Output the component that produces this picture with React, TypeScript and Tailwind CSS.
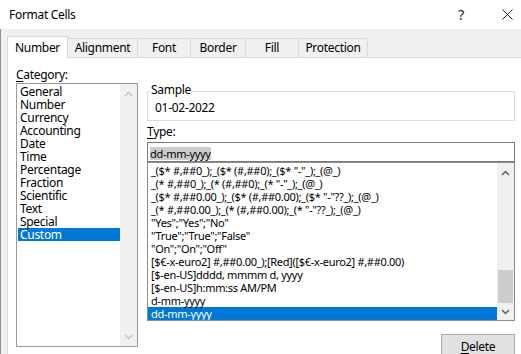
import React from "react";

const cats = ["General","Number","Currency","Accounting","Date","Time","Percentage","Fraction","Scientific","Text","Special","Custom"];
const types = [
  '_($* #,##0_);_($* (#,##0);_($* "-"_);_(@_)',
  '_(* #,##0_);_(* (#,##0);_(* "-"_);_(@_)',
  '_($* #,##0.00_);_($* (#,##0.00);_($* "-"??_);_(@_)',
  '_(* #,##0.00_);_(* (#,##0.00);_(* "-"??_);_(@_)',
  '"Yes";"Yes";"No"',
  '"True";"True";"False"',
  '"On";"On";"Off"',
  '[$€-x-euro2] #,##0.00_);[Red]([$€-x-euro2] #,##0.00)',
  '[$-en-US]dddd, mmmm d, yyyy',
  '[$-en-US]h:mm:ss AM/PM',
  'd-mm-yyyy',
  'dd-mm-yyyy',
];

function Chevron({ up, color }: { up: boolean; color: string }) {
  return (
    <svg width="9" height="6" viewBox="0 0 9 6">
      <path d={up ? "M1 5 L4.5 1.5 L8 5" : "M1 1 L4.5 4.5 L8 1"} fill="none" stroke={color} strokeWidth="1.5" />
    </svg>
  );
}

export default function App() {
  return (
    <div className="w-[521px] h-[354px] overflow-hidden bg-[#f0f0f0] flex flex-col font-['Noto_Sans',sans-serif] text-[12px] tracking-[-0.3px] text-black">
      <div className="h-[29px] shrink-0 bg-white flex items-center">
        <span className="ml-[9px] leading-[14px]">Format Cells</span>
        <span className="ml-auto mr-[38px] text-[14px] leading-[14px] text-[#222]">?</span>
        <svg width="11" height="11" viewBox="0 0 11 11" className="mr-[8px]">
          <path d="M0.5 0.5 L10.5 10.5 M10.5 0.5 L0.5 10.5" stroke="#222" strokeWidth="1" fill="none" />
        </svg>
      </div>
      <div className="flex-1 min-h-0 flex flex-col border-l border-[#8f8f8f] pl-[6px] pt-[7px]">
        <div className="h-[21px] shrink-0 flex items-end">
          <div className="relative z-10 -mb-px h-[22px] w-[61px] bg-white border border-b-0 border-[#d9d9d9] flex items-center justify-center">Number</div>
          <div className="h-[19px] w-[70px] border-t border-r border-[#d9d9d9] flex items-center justify-center">Alignment</div>
          <div className="h-[19px] w-[53px] border-t border-r border-[#d9d9d9] flex items-center justify-center">Font</div>
          <div className="h-[19px] w-[55px] border-t border-r border-[#d9d9d9] flex items-center justify-center">Border</div>
          <div className="h-[19px] w-[53px] border-t border-r border-[#d9d9d9] flex items-center justify-center">Fill</div>
          <div className="h-[19px] w-[69px] border-t border-r border-[#d9d9d9] flex items-center justify-center">Protection</div>
        </div>
        <div className="flex-1 bg-white border-t border-l border-[#d9d9d9] flex pl-[8px] pt-[10px]">
          <div className="w-[122px] shrink-0 flex flex-col">
            <div className="h-[13px] leading-[13px]"><u className="underline-offset-2">C</u>ategory:</div>
            <div className="mt-[2px] h-[264px] border border-[#9a9a9a] flex">
              <div className="flex-1 pt-[1px] pl-[1px]">
                {cats.map((c) => (
                  <div key={c} className={"h-[13px] leading-[13px] pl-[2px] " + (c === "Custom" ? "bg-[#0078d7] text-white" : "")}>{c}</div>
                ))}
              </div>
              <div className="w-[17px] bg-[#f0f0f0] flex flex-col justify-between items-center pt-[7px] pb-[6px]">
                <Chevron up color="#c4c4c4" />
                <Chevron up={false} color="#c4c4c4" />
              </div>
            </div>
          </div>
          <div className="ml-[9px] w-[368px] shrink-0 flex flex-col">
            <div className="mt-[23px] h-[30px] border border-[#dcdcdc] relative pl-[7px] pt-[9px]">
              <span className="absolute -top-[9px] left-[2px] bg-white px-[1px] leading-[13px]">Sample</span>
              <div className="leading-[13px]">01-02-2022</div>
            </div>
            <div className="mt-[4px] h-[13px] leading-[13px]"><u className="underline-offset-2">T</u>ype:</div>
            <div className="mt-[4px] h-[20px] border border-[#7a7a7a] pl-[2px] pt-[2px]">
              <span className="inline-block bg-[#cccccc] text-[11px] leading-[13px]">dd-mm-yyyy</span>
            </div>
            <div className="h-[159px] border border-[#8c8c8c] flex">
              <div className="flex-1 pt-[1px] text-[11px] overflow-hidden">
                {types.map((t) => (
                  <div key={t} className={"h-[13px] leading-[13px] pl-[3px] whitespace-pre " + (t === "dd-mm-yyyy" ? "bg-[#0078d7] text-white" : "")}>{t}</div>
                ))}
              </div>
              <div className="w-[17px] bg-[#f0f0f0] flex flex-col">
                <div className="h-[17px] flex items-center justify-center pt-[2px]"><Chevron up color="#606060" /></div>
                <div className="flex-1 flex flex-col justify-end">
                  <div className="mx-[1px] h-[33px] bg-[#cdcdcd]" />
                </div>
                <div className="h-[17px] flex items-center justify-center"><Chevron up={false} color="#606060" /></div>
              </div>
            </div>
            <div className="self-end mt-[13px] w-[74px] h-[24px] shrink-0 border border-[#adadad] bg-[#e1e1e1] flex items-center justify-center leading-[13px]">
              <span><u className="underline-offset-2">D</u>elete</span>
            </div>
          </div>
        </div>
      </div>
    </div>
  );
}
